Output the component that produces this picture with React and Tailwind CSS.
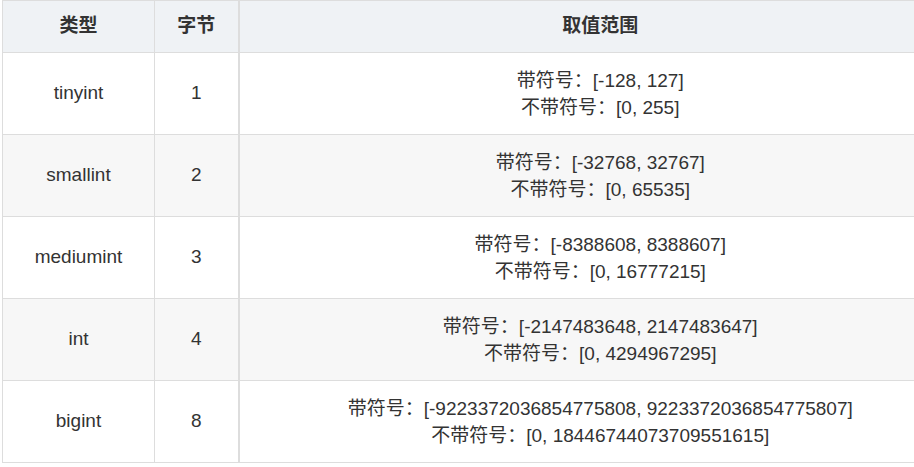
export default function App() {
  const rows = [
    ["tinyint", "1", "[-128, 127]", "[0, 255]"],
    ["smallint", "2", "[-32768, 32767]", "[0, 65535]"],
    ["mediumint", "3", "[-8388608, 8388607]", "[0, 16777215]"],
    ["int", "4", "[-2147483648, 2147483647]", "[0, 4294967295]"],
    ["bigint", "8", "[-9223372036854775808, 9223372036854775807]", "[0, 18446744073709551615]"],
  ];
  return (
    <div className="w-[914px] h-[467px] bg-white overflow-hidden pl-[2px] text-[19px] text-[#333]" style={{ fontFamily: '"Liberation Sans", "Noto Sans CJK SC", sans-serif' }}>
      <table className="border-collapse w-[960px] table-fixed">
        <colgroup>
          <col className="w-[152px]" />
          <col className="w-[84px]" />
          <col />
        </colgroup>
        <thead>
          <tr className="bg-[#eff2f5] h-[52px]">
            <th className="border border-[#dddddd] font-bold text-center">类型</th>
            <th className="border border-[#dddddd] border-r-2 font-bold text-center">字节</th>
            <th className="border border-[#dddddd] font-bold text-center">取值范围</th>
          </tr>
        </thead>
        <tbody>
          {rows.map((r, i) => (
            <tr key={i} className={i % 2 === 1 ? "bg-[#f7f7f7] h-[82px]" : "bg-white h-[82px]"}>
              <td className="border border-[#dddddd] text-center">{r[0]}</td>
              <td className="border border-[#dddddd] border-r-2 text-center">{r[1]}</td>
              <td className="border border-[#dddddd] text-center leading-[27px]">
                <div>带符号：{r[2]}</div>
                <div>不带符号：{r[3]}</div>
              </td>
            </tr>
          ))}
        </tbody>
      </table>
    </div>
  );
}
